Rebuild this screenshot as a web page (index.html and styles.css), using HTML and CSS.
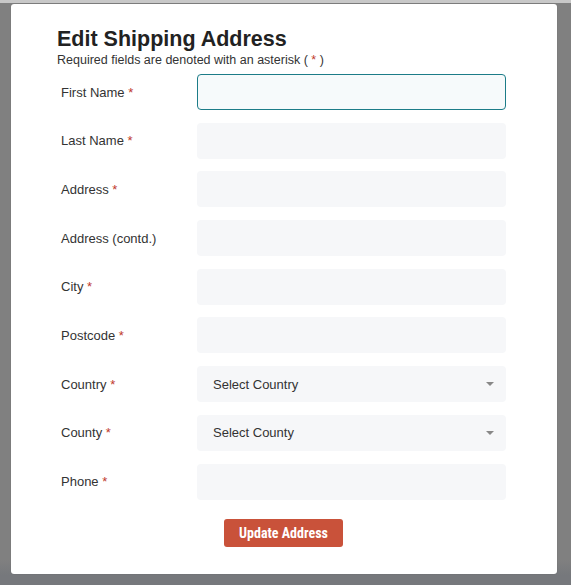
FILE: index.html
```html
<!DOCTYPE html>
<html>
<head>
<meta charset="utf-8">
<link rel="stylesheet" href="styles.css">
</head>
<body>
<div class="backdrop">
  <div class="topstrip"></div>
  <div class="modal">
    <h1 class="title">Edit Shipping Address</h1>
    <p class="subtitle">Required fields are denoted with an asterisk ( <span class="req">*</span> )</p>
    <form class="form">
      <div class="row"><label class="label">First Name <span class="req">*</span></label><div class="input focus"></div></div>
      <div class="row"><label class="label">Last Name <span class="req">*</span></label><div class="input"></div></div>
      <div class="row"><label class="label">Address <span class="req">*</span></label><div class="input"></div></div>
      <div class="row"><label class="label">Address (contd.)</label><div class="input"></div></div>
      <div class="row"><label class="label">City <span class="req">*</span></label><div class="input"></div></div>
      <div class="row"><label class="label">Postcode <span class="req">*</span></label><div class="input"></div></div>
      <div class="row"><label class="label">Country <span class="req">*</span></label><div class="input select"><span>Select Country</span><span class="caret"></span></div></div>
      <div class="row"><label class="label">County <span class="req">*</span></label><div class="input select"><span>Select County</span><span class="caret"></span></div></div>
      <div class="row"><label class="label">Phone <span class="req">*</span></label><div class="input"></div></div>
      <div class="actions"><button type="button" class="btn">Update Address</button></div>
    </form>
  </div>
</div>
</body>
</html>
```
FILE: styles.css
```css
html, body {
  margin: 0;
  padding: 0;
}
body {
  background: #7f7f7f;
  font-family: "Liberation Sans", Arial, sans-serif;
  width: 571px;
  height: 585px;
  overflow: hidden;
}
.backdrop {
  position: relative;
  height: 585px;
  background: linear-gradient(#808080 0, #808080 560px, #76787c 575px, #76787c 585px);
}
.topstrip {
  position: absolute;
  left: 0;
  top: 0;
  width: 571px;
  height: 3px;
  background: #c8c8c8;
}
.modal {
  position: absolute;
  left: 11px;
  top: 4px;
  width: 546px;
  height: 570px;
  background: #fff;
  border-radius: 3px;
  box-sizing: border-box;
  padding: 24px 0 0 46px;
  box-shadow: 0 0 1px rgba(0,0,0,0.3);
}
.title {
  margin: 0;
  font-size: 21.5px;
  font-weight: bold;
  color: #222;
  line-height: 22px;
}
.subtitle {
  margin: 3px 0 0 0;
  font-size: 12.5px;
  line-height: 14px;
  color: #333;
}
.req {
  color: #c0392b;
}
.form {
  margin-top: 7px;
  display: flex;
  flex-direction: column;
  gap: 12.7px;
}
.row {
  display: flex;
  align-items: center;
}
.label {
  width: 140px;
  padding-left: 4px;
  box-sizing: border-box;
  font-size: 13px;
  color: #333;
}
.input {
  width: 309px;
  height: 36px;
  box-sizing: border-box;
  background: #f6f7f9;
  border-radius: 4px;
}
.input.focus {
  border: 1px solid #1c7c88;
  background: #f6fafb;
}
.select {
  display: flex;
  align-items: center;
  justify-content: space-between;
  padding: 0 12px 0 16px;
  font-size: 13px;
  color: #333;
}
.caret {
  width: 0;
  height: 0;
  border-left: 4.5px solid transparent;
  border-right: 4.5px solid transparent;
  border-top: 4.5px solid #888;
}
.actions {
  display: flex;
  padding-left: 167px;
  margin-top: 7px;
}
.btn {
  width: 119px;
  height: 28px;
  border: none;
  border-radius: 3px;
  background: #c9523a;
  color: #fff;
  font-family: "Liberation Sans Narrow", "Roboto Condensed", "Liberation Sans", sans-serif;
  font-weight: bold;
  font-size: 14px;
  padding: 0;
}
```
